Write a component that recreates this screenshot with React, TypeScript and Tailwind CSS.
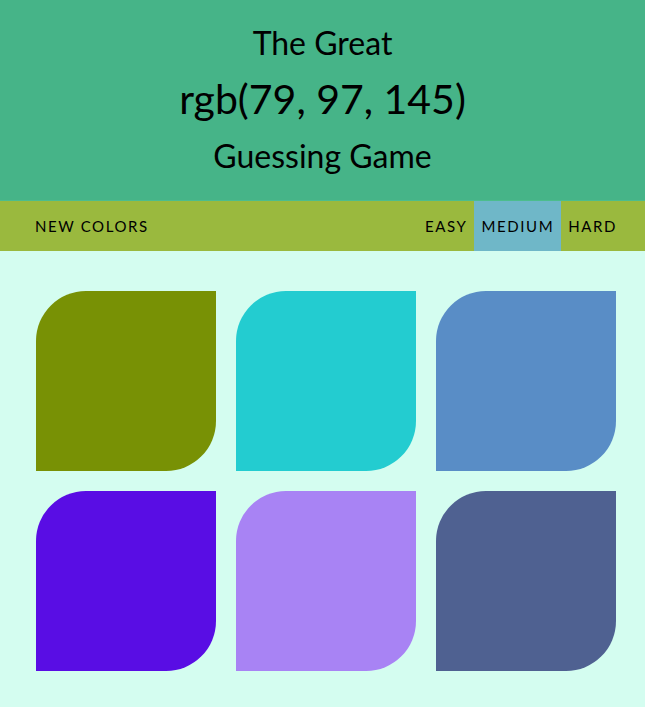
const squares = [
  '#789105',
  '#23ccd0',
  '#598dc6',
  '#590de4',
  '#a883f4',
  '#4f6191',
]

export default function App() {
  return (
    <div className="min-h-[707px] bg-[#d4fdf0] font-['Lato','Open_Sans',sans-serif] text-black">
      {/* Header */}
      <header className="flex h-[201px] flex-col items-center border-b border-[#4cbd8d] bg-[#46b488] pt-[24px]">
        <h1 className="text-[32px] leading-[38px]">The Great</h1>
        <h2 className="mt-[13px] text-[41px] leading-[48px]">rgb(79, 97, 145)</h2>
        <h1 className="mt-[14px] text-[32px] leading-[38px]">Guessing Game</h1>
      </header>

      {/* Controls */}
      <nav className="flex h-[50px] items-center justify-between bg-[#9ab93e] pl-[35px] pr-[21px] text-[15px] tracking-[1.6px] uppercase">
        <button className="uppercase">New Colors</button>
        <div className="flex h-full items-stretch">
          <button className="px-[7px] uppercase">Easy</button>
          <button className="bg-[#6fb7c8] px-[7px] uppercase">Medium</button>
          <button className="px-[7px] uppercase">Hard</button>
        </div>
      </nav>

      {/* Squares */}
      <main className="grid grid-cols-[repeat(3,180px)] gap-5 pb-9 pl-9 pt-10">
        {squares.map((c, i) => (
          <div
            key={i}
            className="h-[180px] w-[180px] rounded-tl-[50px] rounded-br-[50px]"
            style={{ backgroundColor: c }}
          />
        ))}
      </main>
    </div>
  )
}
